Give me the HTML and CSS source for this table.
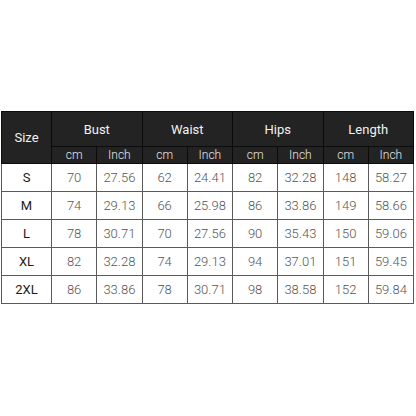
FILE: index.html
```html
<!DOCTYPE html>
<html>
<head>
<meta charset="utf-8">
<link rel="stylesheet" href="styles.css">
</head>
<body>
<div class="page">
<table class="sizes">
<colgroup>
<col class="c-size"><col><col><col><col><col><col><col><col>
</colgroup>
<thead>
<tr class="h1">
<th rowspan="2" class="size-h">Size</th>
<th colspan="2">Bust</th>
<th colspan="2">Waist</th>
<th colspan="2">Hips</th>
<th colspan="2">Length</th>
</tr>
<tr class="h2">
<th>cm</th><th>Inch</th><th>cm</th><th>Inch</th><th>cm</th><th>Inch</th><th>cm</th><th>Inch</th>
</tr>
</thead>
<tbody>
<tr><td class="sz">S</td><td>70</td><td>27.56</td><td>62</td><td>24.41</td><td>82</td><td>32.28</td><td>148</td><td>58.27</td></tr>
<tr><td class="sz">M</td><td>74</td><td>29.13</td><td>66</td><td>25.98</td><td>86</td><td>33.86</td><td>149</td><td>58.66</td></tr>
<tr><td class="sz">L</td><td>78</td><td>30.71</td><td>70</td><td>27.56</td><td>90</td><td>35.43</td><td>150</td><td>59.06</td></tr>
<tr><td class="sz">XL</td><td>82</td><td>32.28</td><td>74</td><td>29.13</td><td>94</td><td>37.01</td><td>151</td><td>59.45</td></tr>
<tr><td class="sz">2XL</td><td>86</td><td>33.86</td><td>78</td><td>30.71</td><td>98</td><td>38.58</td><td>152</td><td>59.84</td></tr>
</tbody>
</table>
</div>
</body>
</html>
```
FILE: styles.css
```css
html, body {
  margin: 0;
  padding: 0;
  background: #ffffff;
}
.page {
  width: 416px;
  height: 416px;
  padding: 111px 0 0 1px;
  box-sizing: border-box;
}
.sizes {
  width: 413px;
  table-layout: fixed;
  border-collapse: collapse;
  font-family: Roboto, "Noto Sans", sans-serif;
  text-align: center;
}
.c-size {
  width: 50px;
}
.sizes th {
  background: #232323;
  color: #f2f2f2;
  font-weight: 400;
  border: 1px solid #0c0c0c;
  padding: 0;
}
.h1 th {
  height: 34px;
  font-size: 13px;
}
.h2 th {
  height: 16px;
  font-size: 12px;
  line-height: 16px;
  font-weight: 300;
  color: #e6e6e6;
}
.sizes td {
  border: 1px solid #5a5a5a;
  height: 27px;
  padding: 0;
  font-size: 13px;
  font-weight: 300;
  color: #555555;
}
.sizes td.sz {
  font-weight: 400;
  color: #1a1a1a;
}
```
